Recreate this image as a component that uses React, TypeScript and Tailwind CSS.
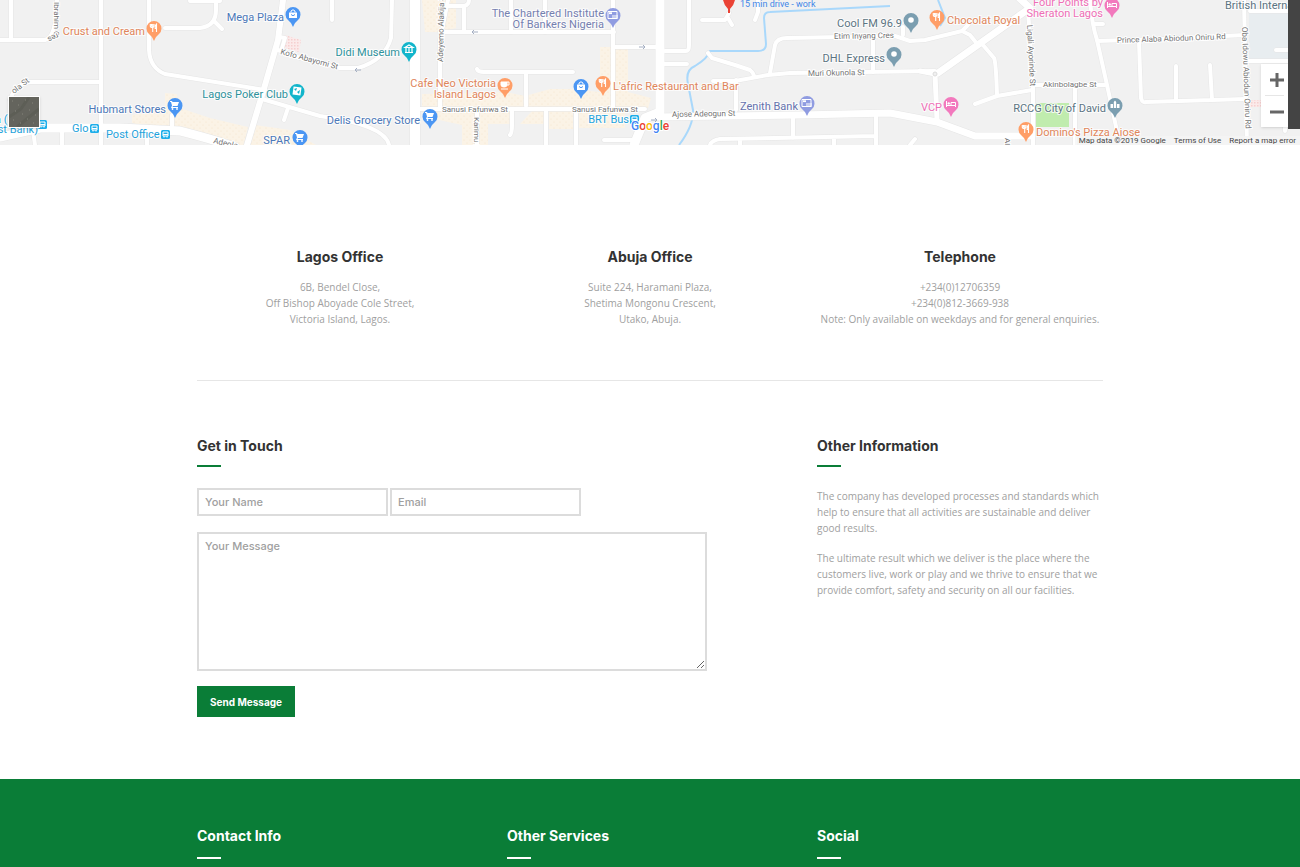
import type { ReactNode } from "react";

type PinKind =
  | "food"
  | "cafe"
  | "bag"
  | "cart"
  | "dice"
  | "museum"
  | "bank"
  | "dot"
  | "bed"
  | "church";

interface Pin {
  x: number;
  y: number;
  color: string;
  kind: PinKind;
}

interface Place {
  x: number;
  y: number;
  text: string;
  color: string;
  anchor?: "start" | "end";
}

interface Street {
  x: number;
  y: number;
  text: string;
  rotate: number;
}

const ORANGE = "#ff9e67";
const BLUE = "#4b96f3";
const TEAL = "#12b5cb";
const PURPLE = "#909ce1";
const SLATE = "#7b9eb0";
const PINK = "#f279bd";

const pins: Pin[] = [
  { x: 154, y: 28, color: ORANGE, kind: "food" },
  { x: 293, y: 14, color: BLUE, kind: "bag" },
  { x: 297, y: 91, color: TEAL, kind: "dice" },
  { x: 175, y: 105, color: BLUE, kind: "cart" },
  { x: 300, y: 137, color: BLUE, kind: "cart" },
  { x: 409, y: 49, color: TEAL, kind: "museum" },
  { x: 505, y: 85, color: ORANGE, kind: "cafe" },
  { x: 430, y: 116, color: BLUE, kind: "cart" },
  { x: 613, y: 15, color: PURPLE, kind: "bank" },
  { x: 581, y: 86, color: BLUE, kind: "bag" },
  { x: 603, y: 83, color: ORANGE, kind: "food" },
  { x: 501, y: 152, color: ORANGE, kind: "food" },
  { x: 807, y: 103, color: PURPLE, kind: "bank" },
  { x: 911, y: 20, color: SLATE, kind: "dot" },
  { x: 894, y: 54, color: SLATE, kind: "dot" },
  { x: 937, y: 17, color: ORANGE, kind: "food" },
  { x: 951, y: 104, color: PINK, kind: "bed" },
  { x: 1112, y: 5, color: PINK, kind: "bed" },
  { x: 1115, y: 105, color: SLATE, kind: "church" },
  { x: 1026, y: 129, color: ORANGE, kind: "food" },
];

const places: Place[] = [
  { x: 145, y: 35, text: "Crust and Cream", color: "#e0855a", anchor: "end" },
  { x: 284, y: 21, text: "Mega Plaza", color: "#4c78b8", anchor: "end" },
  { x: 288, y: 98, text: "Lagos Poker Club", color: "#2e929b", anchor: "end" },
  { x: 166, y: 113, text: "Hubmart Stores", color: "#4c78b8", anchor: "end" },
  { x: 290, y: 144, text: "SPAR", color: "#4c78b8", anchor: "end" },
  { x: 400, y: 56, text: "Didi Museum", color: "#2e929b", anchor: "end" },
  { x: 496, y: 87, text: "Cafe Neo Victoria", color: "#e0855a", anchor: "end" },
  { x: 496, y: 98, text: "Island Lagos", color: "#e0855a", anchor: "end" },
  { x: 420, y: 124, text: "Delis Grocery Store", color: "#4c78b8", anchor: "end" },
  { x: 604, y: 17, text: "The Chartered Institute", color: "#7580b0", anchor: "end" },
  { x: 604, y: 28, text: "Of Bankers Nigeria", color: "#7580b0", anchor: "end" },
  { x: 613, y: 90, text: "L'afric Restaurant and Bar", color: "#e0855a" },
  { x: 798, y: 110, text: "Zenith Bank", color: "#6572ad", anchor: "end" },
  { x: 902, y: 27, text: "Cool FM 96.9", color: "#5b7482", anchor: "end" },
  { x: 885, y: 62, text: "DHL Express", color: "#5b7482", anchor: "end" },
  { x: 947, y: 24, text: "Chocolat Royal", color: "#e0855a" },
  { x: 942, y: 111, text: "VCP", color: "#ee6fb6", anchor: "end" },
  { x: 1103, y: 6, text: "Four Points by", color: "#ee6fb6", anchor: "end" },
  { x: 1103, y: 17, text: "Sheraton Lagos", color: "#ee6fb6", anchor: "end" },
  { x: 1106, y: 112, text: "RCCG City of David", color: "#5b7482", anchor: "end" },
  { x: 1036, y: 136, text: "Domino's Pizza Ajose", color: "#e0855a" },
  { x: 1225, y: 9, text: "British International", color: "#5b7482" },
  { x: 72, y: 132, text: "Glo", color: "#1fa3dc" },
  { x: 106, y: 138, text: "Post Office", color: "#1fa3dc" },
  { x: 629, y: 123, text: "BRT Bus", color: "#1fa3dc", anchor: "end" },
  { x: -5, y: 123, text: "a (", color: "#1fa3dc" },
  { x: 38, y: 133, text: "First Bank)", color: "#1fa3dc", anchor: "end" },
];

const streets: Street[] = [
  { x: 54, y: 2, text: "Ibrahim C", rotate: 90 },
  { x: 57, y: 33, text: "res", rotate: 155 },
  { x: 14, y: 94, text: "ola St", rotate: -38 },
  { x: 280, y: 54, text: "Kofo Abayomi St", rotate: 15 },
  { x: 213, y: 143, text: "Adeola", rotate: 13 },
  { x: 443, y: 62, text: "Adeyemo Alakija St", rotate: -89 },
  { x: 442, y: 112, text: "Sanusi Fafunwa St", rotate: 0 },
  { x: 572, y: 112, text: "Sanusi Fafunwa St", rotate: 0 },
  { x: 474, y: 117, text: "Karimu Kotun", rotate: 90 },
  { x: 672, y: 117, text: "Ajose Adeogun St", rotate: -1 },
  { x: 834, y: 39, text: "Etim Inyang Cres", rotate: -1 },
  { x: 808, y: 76, text: "Muri Okunola St", rotate: -1 },
  { x: 1027, y: 25, text: "Ligali Ayorinde St", rotate: 87 },
  { x: 1043, y: 87, text: "Akinbolagbe St", rotate: 0 },
  { x: 1117, y: 43, text: "Prince Alaba Abiodun Oniru Rd", rotate: -2 },
  { x: 1242, y: 27, text: "Oba Idowu Abiodun Oniru Rd", rotate: 88 },
  { x: 1005, y: 138, text: "Al", rotate: 90 },
];

const minorRoads = [
  "M11 0V40M0 40H45Q56 38 57 0",
  "M101 0V145M149 0V50Q150 68 165 74L265 90",
  "M165 28H200Q216 26 216 10V0M214 21L222 29M190 1H220",
  "M278 50L300 58L340 68H358Q385 60 391 38L392 0M279 37L285 38L282 48",
  "M262 99L320 116Q385 125 389 145M284 120L288 108",
  "M100 82H30Q15 84 10 100M172 115V130M33 130L35 145M62 130V145M147 135V145",
  "M332 0V20M448 0L440 40V108M440 32H614M464 6V32M448 6H464Q469 5 469 0",
  "M511 0V32M545 0V32M613 0V108M477 69Q478 72 484 72H573M526 72V106",
  "M420 109H645M512 111V125Q512 133 510 135M546 109V145M576 109V145M477 109V145",
  "M604 140H635M614 47H660M665 51H686Q689 51 689 45V0M663 64H687",
  "M702 20H725L729 13M728 18L732 25M758 0V12L755 20",
  "M708 53L712 58L735 65L750 70Q754 73 754 77M713 81H735L768 75L790 73L935 71",
  "M770 73L775 45Q777 38 787 38L895 36L910 41L925 40L962 31L970 35L978 45M962 31L968 25M903 35V27",
  "M736 80V110M793 115V138M710 145Q712 140 720 139L876 136M740 140V145M834 138V145M876 113V145",
  "M873 38V72M983 45L994 58Q996 62 997 95M975 104L997 96L1032 90M910 145L915 139",
  "M1028 10L1033 85V145M1035 85H1105M1075 88V145",
  "M1090 0Q1092 25 1097 40L1107 85L1120 145M1095 24H1103M1097 41L1160 39L1245 35",
  "M1139 42L1141 98Q1142 103 1146 102L1245 99M1176 100V66M1212 100L1210 65",
  "M1244 0L1247 145M1250 11H1290M1276 50H1290M1248 61H1300M1285 125V131",
];

const majorRoads = [
  { d: "M283 0L278 40L263 92L247 145", width: 6 },
  { d: "M0 137L40 128H120L180 131Q215 140 235 147", width: 9 },
  { d: "M415 0V145", width: 10 },
  { d: "M660 0V112L645 118L634 145", width: 9 },
  { d: "M655 117L800 115L890 113L937 122L975 136H1030", width: 7 },
  { d: "M938 73L1030 8L1018 -3", width: 7 },
  { d: "M935 74L937 120M920 71L935 74", width: 5 },
];

function Glyph({ kind }: { kind: PinKind }) {
  switch (kind) {
    case "food":
      return (
        <path
          d="M-2.500 -4V-1.500M-1.300 -4V4M-3.700 -4V-1.700Q-3.700 -.5 -1.300 -.5Q0 -.5 0 -1.700V-4M2.500 4V-4Q1 -3 1.200 .5H2.500"
          fill="none"
          stroke="#fff"
          strokeWidth="1.100"
        />
      );
    case "cafe":
      return (
        <g fill="none" stroke="#fff">
          <path d="M-4 -3H2V0Q2 2 -1 2Q-4 2 -4 0Z" fill="#fff" />
          <path d="M2 -3H4V0H2M-4 4H3" />
        </g>
      );
    case "bag":
      return (
        <g fill="none">
          <path d="M-4 -1.500H4V4H-4Z" fill="#fff" />
          <path d="M-2 -1.500V-3Q0 -5.500 2 -3V-1.500" stroke="#fff" />
          <path d="M-2 .5Q0 3 2 .5" stroke={BLUE} />
        </g>
      );
    case "cart":
      return (
        <g fill="#fff">
          <path d="M-5 -4H-3L-2.500 -3H4L2.500 1H-2L-2.500 2H3V3H-4L-3 .5L-4 -3H-5Z" />
          <circle cx="-2.500" cy="4" r="0.900" />
          <circle cx="2" cy="4" r="0.900" />
        </g>
      );
    case "dice":
      return (
        <g>
          <path d="M-4 -4H4V4H-4Z" fill="#fff" transform="rotate(8)" />
          <path d="M-3 -2L0 -3L-1 0ZM0 1L3 -1L2 3Z" fill={TEAL} />
        </g>
      );
    case "museum":
      return (
        <path
          d="M-4 -1.500L0 -4L4 -1.500ZM-3 -1V3M0 -1V3M3 -1V3M-4 3.500H4"
          fill="none"
          stroke="#fff"
          strokeWidth="1.200"
        />
      );
    case "bank":
      return (
        <g fill="none" stroke="#fff">
          <path d="M-5 -3.500H4V3.500H-5Z" />
          <path d="M-4 -1.800H-1" strokeWidth="1.800" />
          <path d="M-1 1H5M-1 3H5" strokeWidth="1.200" />
        </g>
      );
    case "dot":
      return <circle r="2.800" fill="#fff" />;
    case "bed":
      return (
        <g fill="none" stroke="#fff">
          <path d="M-4.500 -3V3M-4.500 1.500H4.500V3M4.500 1.500V-1.500H0V1" />
          <circle cx="-2.300" cy="-.6" r="1.200" fill="#fff" stroke="none" />
        </g>
      );
    case "church":
      return <path d="M-4.500 3V-1H-2V3ZM-1.200 3V-3L0 -4.500L1.200 -3V3ZM2 3V-1H4.500V3Z" fill="#fff" />;
  }
}

function BusStop({ x, y }: { x: number; y: number }) {
  return (
    <g transform={`translate(${x} ${y})`}>
      <rect width="9" height="9" rx="1.500" fill="#1eaeea" />
      <path d="M2 2H7V6H2ZM2 4.500H7M3 6V7.500M6 6V7.500" fill="none" stroke="#fff" />
    </g>
  );
}

function MapDrawing() {
  return (
    <svg
      viewBox="0 0 1300 145"
      preserveAspectRatio="xMidYMid slice"
      className="block h-full w-full font-['Roboto',sans-serif]"
      role="img"
      aria-label="Map of Victoria Island, Lagos"
    >
      <defs>
        <pattern id="dots" width="6" height="6" patternUnits="userSpaceOnUse">
          <rect width="6" height="6" fill="#fbf3e6" />
          <circle cx="2" cy="2" r=".5" fill="#f5e3c6" />
          <circle cx="5" cy="5" r=".5" fill="#f5e3c6" />
        </pattern>
        <pattern id="checks" width="3" height="3" patternUnits="userSpaceOnUse">
          <rect width="3" height="3" fill="#fbeaea" />
          <rect width="1.500" height="1.500" fill="#f6cfcf" />
        </pattern>
      </defs>
      <rect width="1300" height="145" fill="#f1f1f1" />

      {/* Blocks */}
      <g fill="url(#dots)">
        <path d="M132 115L165 110V93L177 94V107L210 118L248 127L244 145H215L132 123Z" />
        <path d="M255 125L290 130L316 145H248Z" />
        <path d="M422 0H456V28L440 32H425ZM422 94L505 92L525 96L550 89H570L600 92V47H628V92L651 98L648 108H422ZM430 111H510V124H488V145H462V125L430 118ZM532 111H545V124H520ZM549 111H573V129H549ZM579 111H625V128H579Z" />
      </g>
      <path d="M285 35L301 40L299 52L281 47ZM1250 100H1261V107H1250Z" fill="url(#checks)" />
      <rect x="1249" y="13" width="40" height="47" fill="#e8edf0" />
      <rect x="1036" y="103" width="33" height="24" fill="#c0ecae" />

      <path
        d="M890 6L770 12Q764 12 764 18L766 44Q766 51 758 51H710Q708 58 695 66Q685 70 688 84L693 110Q694 125 679 145M938 0L945 18L940 26"
        fill="none"
        stroke="#a9d8fb"
        strokeWidth="2"
      />

      {/* Roads, each with a faint casing below */}
      <g fill="none" strokeLinecap="round" strokeLinejoin="round">
        {minorRoads.map(d => (
          <path key={d} d={d} stroke="#e6e6e6" strokeWidth="5" />
        ))}
        {majorRoads.map(r => (
          <path key={r.d} d={r.d} stroke="#e6e6e6" strokeWidth={r.width + 1} />
        ))}
        {minorRoads.map(d => (
          <path key={d} d={d} stroke="#fff" strokeWidth="4" />
        ))}
        {majorRoads.map(r => (
          <path key={r.d} d={r.d} stroke="#fff" strokeWidth={r.width} />
        ))}
      </g>
      <circle cx="935" cy="74" r="2" fill="#f0f0f0" stroke="#ddd" />
      <path
        d="M478 32H472M474 30L472 32L474 34M361 70H355M357 68L355 70L357 72M639 47H645M643 45L645 47L643 49M651 120H657M655 118L657 120L655 122"
        fill="none"
        stroke="#a5afc2"
      />

      {/* Labels */}
      <g fontSize="8" fill="#747474" stroke="#fff" strokeWidth="2" paintOrder="stroke">
        {streets.map(s => (
          <text key={`${s.x}-${s.text}`} transform={`translate(${s.x} ${s.y}) rotate(${s.rotate})`}>
            {s.text}
          </text>
        ))}
      </g>
      <g fontSize="11" stroke="#fff" strokeWidth="2" strokeOpacity="0.8" paintOrder="stroke">
        {places.map(p => (
          <text key={p.text} x={p.x} y={p.y} fill={p.color} textAnchor={p.anchor ?? "start"}>
            {p.text}
          </text>
        ))}
      </g>
      <text x="740" y="7" fontSize="9" fill="#3f86e8">
        15 min drive - work
      </text>

      <BusStop x={38} y={120} />
      <BusStop x={90} y={124} />
      <BusStop x={161} y={130} />
      <BusStop x={630} y={115} />

      {pins.map(p => (
        <g key={`${p.x}-${p.y}`} transform={`translate(${p.x} ${p.y})`}>
          <path d="M0 13Q-1 9 -5 6A7.500 7.500 0 1 1 5 6Q1 9 0 13Z" fill={p.color} />
          <Glyph kind={p.kind} />
        </g>
      ))}
      <path d="M723 0H735Q734 5 730 9V13H728V9Q724 5 723 0Z" fill="#ea4335" />

      <text
        x="631"
        y="130"
        fontSize="12"
        fontWeight="500"
        stroke="#fff"
        strokeWidth="2"
        paintOrder="stroke"
      >
        <tspan fill="#4285f4">G</tspan>
        <tspan fill="#ea4335">o</tspan>
        <tspan fill="#fbbc05">o</tspan>
        <tspan fill="#4285f4">g</tspan>
        <tspan fill="#34a853">l</tspan>
        <tspan fill="#ea4335">e</tspan>
      </text>
    </svg>
  );
}

function MapSection() {
  return (
    <section className="relative h-[145px] overflow-hidden bg-[#f1f1f1]">
      <MapDrawing />

      {/* Satellite view toggle */}
      <button
        type="button"
        aria-label="Satellite view"
        className="absolute bottom-[17px] left-2 h-8 w-8 border border-white bg-[#64645d] shadow"
      >
        <svg viewBox="0 0 30 30" className="h-full w-full" fill="none" aria-hidden="true">
          <path d="M0 20L12 12L20 0M8 30L30 12" stroke="#5d5e56" strokeWidth="3" />
          <path
            d="M3 4h1M9 8h1M16 3h1M23 6h1M6 14h1M13 17h1M20 13h1M26 18h1M4 23h1M11 26h1M18 22h1M24 26h1"
            stroke="#85857c"
          />
        </svg>
      </button>

      {/* Zoom */}
      <div className="absolute right-3 bottom-[18px] flex w-[27px] flex-col bg-white shadow">
        <button type="button" aria-label="Zoom in" className="flex h-[31px] items-center justify-center">
          <svg viewBox="0 0 14 14" className="ml-1 h-3.5 w-3.5" aria-hidden="true">
            <path d="M7 0V14M0 7H14" stroke="#666" strokeWidth="3" />
          </svg>
        </button>
        <div className="mx-1 h-px bg-[#e6e6e6]" />
        <button type="button" aria-label="Zoom out" className="flex h-[31px] items-center justify-center">
          <svg viewBox="0 0 14 14" className="ml-1 h-3.5 w-3.5" aria-hidden="true">
            <path d="M0 7H14" stroke="#666" strokeWidth="3" />
          </svg>
        </button>
      </div>
      <div className="absolute top-0 right-0 h-[129px] w-3 bg-[#444]" />

      <div className="absolute right-0 bottom-0 flex gap-2 bg-[#f5f5f5]/80 pr-1 pl-1 font-['Roboto',sans-serif] text-[8px] leading-[9px] text-[#444]">
        <span>Map data ©2019 Google</span>
        <a href="#terms">Terms of Use</a>
        <a href="#report">Report a map error</a>
      </div>
    </section>
  );
}

function Office({ title, children }: { title: string; children: ReactNode }) {
  return (
    <div className="text-center">
      <h3 className="font-['Inter',sans-serif] text-[14px] leading-5 font-bold text-[#333]">{title}</h3>
      <p className="mt-3 text-[10px] leading-4 whitespace-nowrap text-[#a0a0a0]">{children}</p>
    </div>
  );
}

function SectionTitle({ children }: { children: ReactNode }) {
  return (
    <>
      <h3 className="font-['Inter',sans-serif] text-[14px] leading-5 font-bold text-[#333]">{children}</h3>
      <div className="mt-[9px] h-[2px] w-6 bg-[#0a7d37]" />
    </>
  );
}

function FooterTitle({ children }: { children: ReactNode }) {
  return (
    <div>
      <h3 className="font-['Inter',sans-serif] text-[14px] leading-5 font-bold text-white">{children}</h3>
      <div className="mt-[11px] h-[2px] w-6 bg-white" />
    </div>
  );
}

const fieldStyle =
  "border-2 border-[#dcdcdc] bg-white px-1.5 font-['Inter',sans-serif] text-[11px] font-medium text-[#444] placeholder:text-[#a0a0a0] focus:border-[#0a7d37] focus:outline-none";

function App() {
  return (
    <div className="bg-white font-['Open_Sans',sans-serif]">
      <MapSection />

      <main className="mx-auto max-w-[906px]">
        <section className="grid grid-cols-3 gap-6 border-b border-[#e6e6e6] pt-[102px] pb-[53px]">
          <Office title="Lagos Office">
            6B, Bendel Close,
            <br />
            Off Bishop Aboyade Cole Street,
            <br />
            Victoria Island, Lagos.
          </Office>
          <Office title="Abuja Office">
            Suite 224, Haramani Plaza,
            <br />
            Shetima Mongonu Crescent,
            <br />
            Utako, Abuja.
          </Office>
          <Office title="Telephone">
            +234(0)12706359
            <br />
            +234(0)812-3669-938
            <br />
            Note: Only available on weekdays and for general enquiries.
          </Office>
        </section>

        <section className="grid grid-cols-3 gap-6 pt-[55px] pb-[62px]">
          <div className="col-span-2">
            <SectionTitle>Get in Touch</SectionTitle>
            <form className="mt-[21px]" onSubmit={e => e.preventDefault()}>
              <div className="flex gap-0.5">
                <input
                  type="text"
                  aria-label="Your Name"
                  placeholder="Your Name"
                  className={`h-7 w-[191px] ${fieldStyle}`}
                />
                <input
                  type="email"
                  aria-label="Email"
                  placeholder="Email"
                  className={`h-7 w-[191px] ${fieldStyle}`}
                />
              </div>
              <textarea
                aria-label="Your Message"
                placeholder="Your Message"
                className={`mt-4 block h-[139px] w-full max-w-[510px] resize py-1 leading-4 ${fieldStyle}`}
              />
              <button
                type="submit"
                className="mt-[15px] block h-[31px] bg-[#0a7d37] px-[13px] font-['Inter',sans-serif] text-[10px] leading-4 font-bold whitespace-nowrap text-white"
              >
                Send Message
              </button>
            </form>
          </div>

          <div>
            <SectionTitle>Other Information</SectionTitle>
            <div className="mt-[21px] space-y-3.5 text-[10px] leading-4 text-[#a0a0a0]">
              <p>
                The company has developed processes and standards which help to ensure that all
                activities are sustainable and deliver good results.
              </p>
              <p>
                The ultimate result which we deliver is the place where the customers live, work or
                play and we thrive to ensure that we provide comfort, safety and security on all our
                facilities.
              </p>
            </div>
          </div>
        </section>
      </main>

      <footer className="bg-[#0a7d37] pt-[47px] pb-2">
        <div className="mx-auto grid max-w-[906px] grid-cols-3 gap-6">
          <FooterTitle>Contact Info</FooterTitle>
          <FooterTitle>Other Services</FooterTitle>
          <FooterTitle>Social</FooterTitle>
        </div>
      </footer>
    </div>
  );
}

export default App;
